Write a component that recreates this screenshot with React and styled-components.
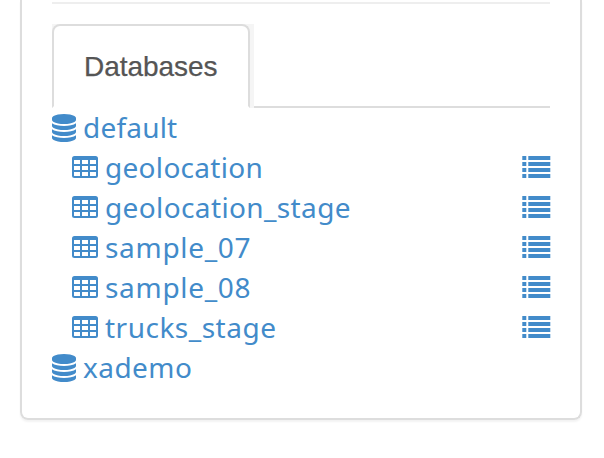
import React from 'react';
import styled, { createGlobalStyle } from 'styled-components';

const GlobalStyle = createGlobalStyle`
  body { margin: 0; background: #fff; overflow: hidden; }
  *, *::before, *::after { box-sizing: border-box; }
`;

const Page = styled.main`
  height: 458px;
  padding: 0 22px 38px 20px;
  overflow: hidden;
`;

const Panel = styled.section`
  height: 420px;
  padding: 2px 30px 0;
  border: 2px solid #ddd;
  border-top: 0;
  border-radius: 0 0 8px 8px;
  box-shadow: 0 2px 2px rgba(0, 0, 0, 0.05);
`;

const Divider = styled.hr`
  height: 2px;
  margin: 0 0 20px;
  border: 0;
  background: #eee;
`;

const TabBar = styled.div`
  display: flex;
  height: 84px;
`;

const TabSlot = styled.div`
  width: 202px;
  padding-right: 4px;
  background: #f5f5f5;
`;

const Tab = styled.div`
  display: flex;
  align-items: center;
  height: 84px;
  padding: 2px 0 0 30px;
  border: 2px solid #ddd;
  border-bottom-color: #fff;
  border-radius: 8px 8px 0 0;
  background: #fff;
  color: #555;
  font: 28px/40px "Liberation Sans", Arial, sans-serif;
  letter-spacing: ${(p) => p.$tracking}px;
  -webkit-text-stroke: 0.25px #555;
`;

const TabRule = styled.div`
  flex: 1;
  border-bottom: 2px solid #ddd;
`;

const Tree = styled.ul`
  margin: 0;
  padding: 0;
  list-style: none;
`;

const Row = styled.li`
  display: flex;
  align-items: center;
  height: 40px;
  padding-left: ${(p) => (p.$nested ? 20 : 0)}px;
  color: #428bca;
`;

const Label = styled.span`
  margin: 0 0 2px 7px;
  font: 28px/40px "Noto Sans", "Open Sans", sans-serif;
  letter-spacing: ${(p) => p.$tracking}px;
  white-space: nowrap;
`;

const Icon = styled.svg`
  display: block;
  flex: none;
  fill: currentColor;
`;

const TableGlyph = styled(Icon)`
  margin-bottom: 2px;
`;

const ListGlyph = styled(Icon)`
  margin: 0 -1px 2px auto;
`;

const DatabaseIcon = () => (
  <Icon width="24" height="28" viewBox="0 0 1536 1792">
    <path d="M768 768q237 0 443-43t325-127v170q0 69-103 128t-280 93.5-385 34.5-385-34.5-280-93.5-103-128v-170q119 84 325 127t443 43zm0 768q237 0 443-43t325-127v170q0 69-103 128t-280 93.5-385 34.5-385-34.5-280-93.5-103-128v-170q119 84 325 127t443 43zm0-384q237 0 443-43t325-127v170q0 69-103 128t-280 93.5-385 34.5-385-34.5-280-93.5-103-128v-170q119 84 325 127t443 43zm0-1152q208 0 385 34.5t280 93.5 103 128v128q0 69-103 128t-280 93.5-385 34.5-385-34.5-280-93.5-103-128v-128q0-69 103-128t280-93.5 385-34.5z" />
  </Icon>
);

const TableIcon = () => (
  <TableGlyph width="26" height="22" viewBox="0 0 26 22">
    <path
      fillRule="evenodd"
      d="M2.5 0h21A2.5 2.5 0 0 1 26 2.5v17a2.5 2.5 0 0 1-2.5 2.5h-21A2.5 2.5 0 0 1 0 19.5v-17A2.5 2.5 0 0 1 2.5 0zM2 4v4h6V4zM10 4v4h6V4zM18 4v4h6V4zM2 10v4h6v-4zM10 10v4h6v-4zM18 10v4h6v-4zM2 16v3.5a.5.5 0 0 0 .5.5H8v-4zM10 16v4h6v-4zM18 16v4h5.5a.5.5 0 0 0 .5-.5V16z"
    />
  </TableGlyph>
);

const ListIcon = () => (
  <ListGlyph width="29" height="22" viewBox="0 0 29 22">
    {[0, 6, 12, 18].map((y) => (
      <path key={y} d={`M.3 ${y}h4v4h-4zM6.3 ${y}h22v4h-22z`} />
    ))}
  </ListGlyph>
);

const entries = [
  { name: 'default', tracking: 0.2 },
  { name: 'geolocation', nested: true, tracking: 0.3 },
  { name: 'geolocation_stage', nested: true, tracking: 0.38 },
  { name: 'sample_07', nested: true, tracking: 0.7 },
  { name: 'sample_08', nested: true, tracking: 0.7 },
  { name: 'trucks_stage', nested: true, tracking: 0.5 },
  { name: 'xademo', tracking: 0.45 },
];

export default function App() {
  return (
    <Page>
      <GlobalStyle />
      <Panel>
        <Divider />
        <TabBar>
          <TabSlot>
            <Tab $tracking={-0.05}>Databases</Tab>
          </TabSlot>
          <TabRule />
        </TabBar>
        <Tree>
          {entries.map((e) => (
            <Row key={e.name} $nested={e.nested}>
              {e.nested ? <TableIcon /> : <DatabaseIcon />}
              <Label $tracking={e.tracking}>{e.name}</Label>
              {e.nested && <ListIcon />}
            </Row>
          ))}
        </Tree>
      </Panel>
    </Page>
  );
}
